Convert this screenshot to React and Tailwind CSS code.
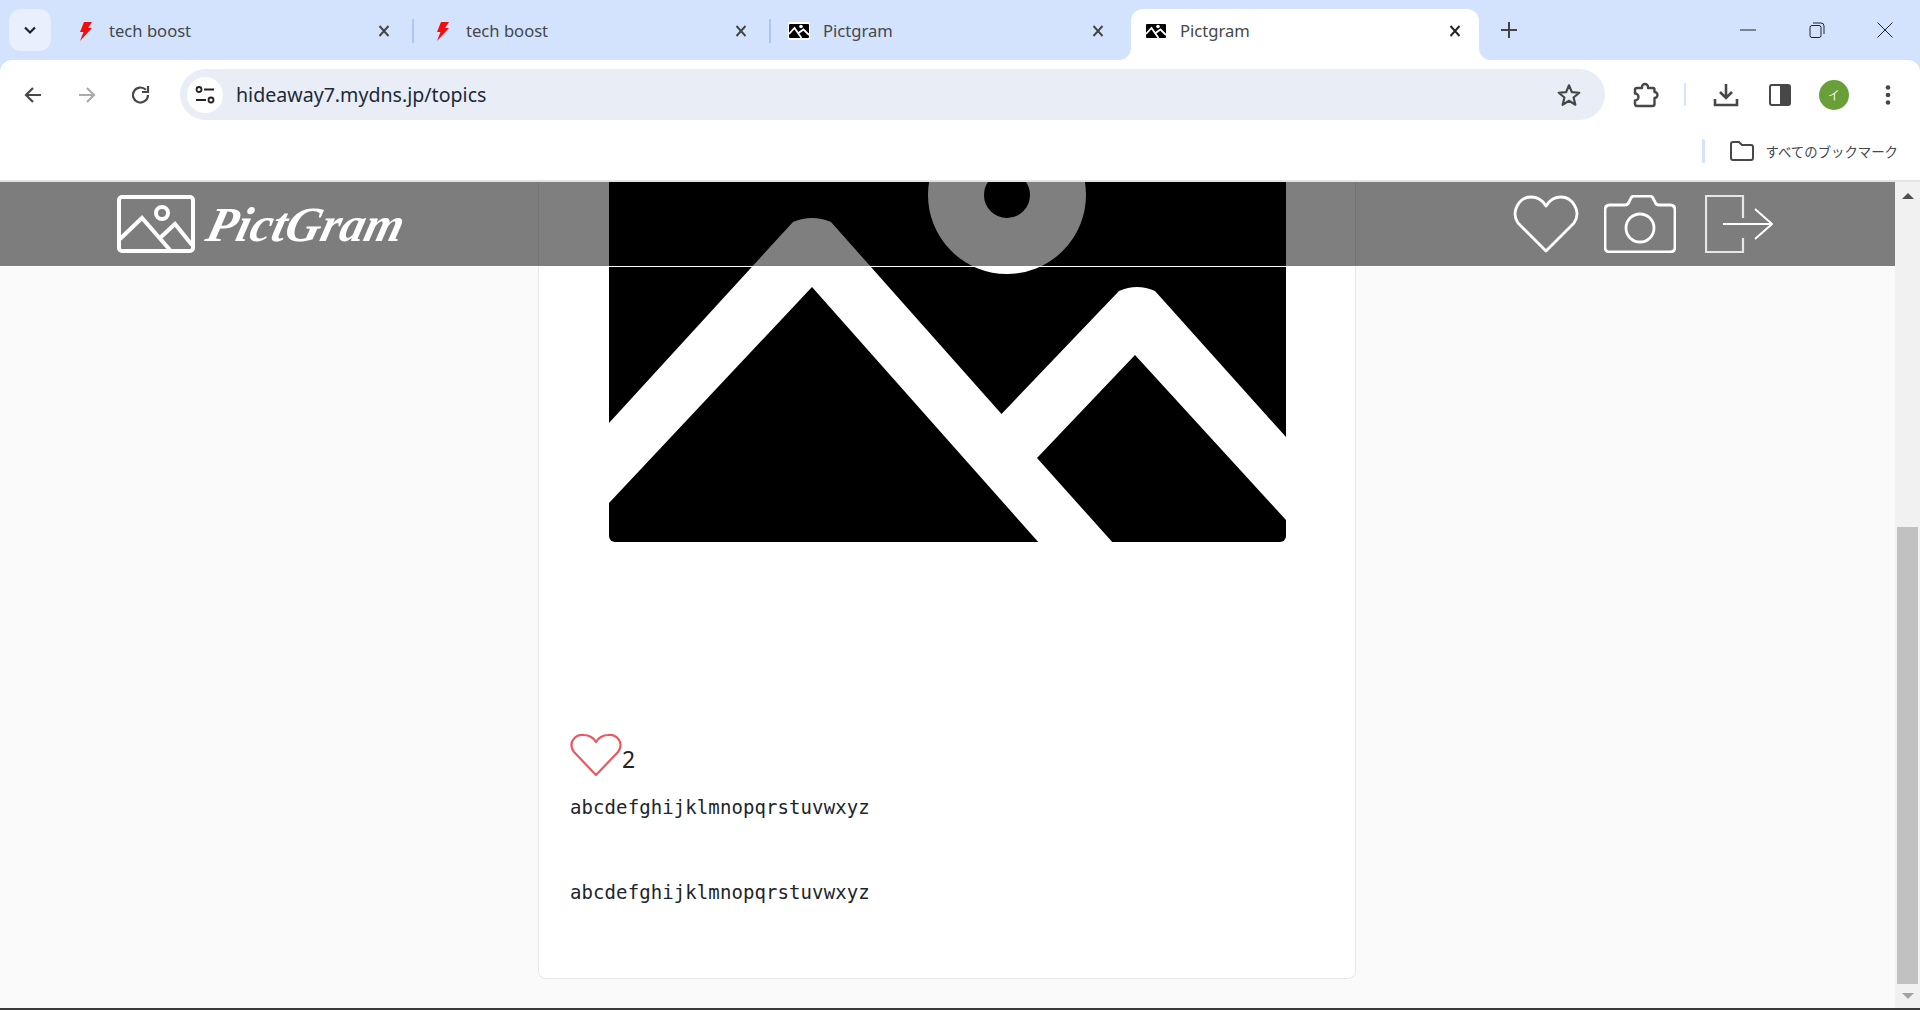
import React from "react";

const Bolt = () => (
  <svg width="14" height="19" viewBox="0 0 14 19" className="ml-[5px] shrink-0">
    <path d="M5 0 L13 0 L9 6 L13 6 L1 19 L4.5 10 L1 10 Z" fill="#f40b0b" />
  </svg>
);

const Pict = ({ frame }) => (
  <svg width="22" height="18" viewBox="0 0 22 18" className="shrink-0">
    {frame ? <rect width="22" height="18" rx="2" fill="#fff" /> : null}
    <rect x="1" y="2" width="20" height="14" rx="1" fill="#000" />
    <circle cx="13" cy="4.5" r="1.8" fill="#fff" />
    <path d="M1 12 L6.5 6 L13.5 16 M10.5 11 L15.5 7.5 L21 13" fill="none" stroke="#fff" strokeWidth="1.8" />
  </svg>
);

const Close = ({ dark }) => (
  <svg width="12" height="12" viewBox="0 0 12 12" className="shrink-0">
    <path d="M1.5 1 L10.5 11 M10.5 1 L1.5 11" stroke={dark ? "#222" : "#444"} strokeWidth="1.9" />
  </svg>
);

const Tab = ({ icon, title, sep, active }) => (
  <div className={active ? "relative flex h-[51px] w-[348px] items-center rounded-t-xl bg-white pb-[7px] pl-[14px] pr-[18px]" : "relative flex h-[51px] w-[357px] items-center pb-[7px] pl-[14px] pr-[27px]"}>
    <div className="flex w-[35px] shrink-0 items-center">{icon}</div>
    <span className="flex-1 text-[16.6px] text-[#45474a] [font-family:'Noto_Sans',sans-serif]">{title}</span>
    <Close dark={active} />
    {sep ? <div className="absolute right-[3px] top-[10px] h-[24px] w-[2px] bg-[#a8c7fa]" /> : null}
    {active ? (
      <>
        <div className="absolute bottom-0 left-[-12px] h-[12px] w-[12px] bg-white">
          <div className="h-full w-full rounded-br-xl bg-[#d3e3fd]" />
        </div>
        <div className="absolute bottom-0 right-[-12px] h-[12px] w-[12px] bg-white">
          <div className="h-full w-full rounded-bl-xl bg-[#d3e3fd]" />
        </div>
      </>
    ) : null}
  </div>
);

const Icon = ({ className, size = 24, children, box = "0 0 24 24" }) => (
  <svg width={size} height={size} viewBox={box} className={className} fill="none">
    {children}
  </svg>
);

export default function App() {
  return (
    <div className="flex h-[1010px] w-[1920px] flex-col overflow-hidden bg-[#d3e3fd] [font-family:'Noto_Sans',sans-serif]">
      {/* tab strip */}
      <div className="flex h-[60px] shrink-0 items-end">
        <div className="ml-[9px] mr-[9px] mb-[9px] flex h-[42px] w-[42px] items-center justify-center rounded-xl bg-[#e8f0fe]">
          <Icon size={14} box="0 0 14 14"><path d="M2 4.5 L7 9.5 L12 4.5" stroke="#222" strokeWidth="2.2" /></Icon>
        </div>
        <Tab icon={<Bolt />} title="tech boost" sep />
        <Tab icon={<Bolt />} title="tech boost" sep />
        <Tab icon={<Pict frame />} title="Pictgram" />
        <Tab icon={<Pict />} title="Pictgram" active />
        <div className="mb-[21px] ml-[21px] flex w-[18px] items-center justify-center">
          <Icon size={18} box="0 0 18 18"><path d="M9 1 V17 M1 9 H17" stroke="#444" strokeWidth="2" /></Icon>
        </div>
        <div className="mb-[21px] ml-[222px] flex h-[18px] w-[153px] items-center justify-between">
          <Icon size={16} box="0 0 16 16"><path d="M0 8 H16" stroke="#222" strokeWidth="1" /></Icon>
          <Icon size={16} box="0 0 16 16"><rect x="1" y="3.5" width="11" height="12" rx="2" stroke="#222" /><path d="M4 1 H12 Q15 1 15 4 V12" stroke="#222" /></Icon>
          <Icon size={16} box="0 0 16 16"><path d="M0.5 0.5 L15.5 15.5 M15.5 0.5 L0.5 15.5" stroke="#222" strokeWidth="1" /></Icon>
        </div>
      </div>

      {/* toolbar */}
      <div className="shrink-0 rounded-t-xl bg-white">
        <div className="flex h-[69px] items-center pl-[21px] pt-[9px] pb-[9px]">
          <Icon><path d="M20 12 H5 M12 5 L5 12 L12 19" stroke="#474747" strokeWidth="2.2" /></Icon>
          <Icon className="ml-[30px]"><path d="M4 12 H19 M12 5 L19 12 L12 19" stroke="#ababab" strokeWidth="2.2" /></Icon>
          <Icon className="ml-[30px]"><path d="M19 12 A7.5 7.5 0 1 1 16.8 6.7" stroke="#474747" strokeWidth="2.2" /><path d="M19 3 V9 H13" stroke="#474747" strokeWidth="2.2" /></Icon>
          <div className="ml-[27px] flex h-[51px] w-[1425px] items-center rounded-full bg-[#e9eef6] pl-[7px] pr-[23px]">
            <div className="flex h-[36px] w-[36px] items-center justify-center rounded-full bg-white">
              <Icon size={22} box="0 0 22 22">
                <circle cx="5" cy="5.5" r="2.5" stroke="#222" strokeWidth="1.8" />
                <path d="M10 5.5 H20 M2 16 H12" stroke="#222" strokeWidth="2" />
                <circle cx="17" cy="16" r="2.5" stroke="#222" strokeWidth="1.8" />
              </Icon>
            </div>
            <span className="ml-[13px] flex-1 text-[19.6px] text-[#1f2937]">hideaway7.mydns.jp/topics</span>
            <Icon size={26} box="0 0 24 24"><path d="M12 3 L14.6 9.4 L21.5 9.9 L16.2 14.3 L17.9 21 L12 17.3 L6.1 21 L7.8 14.3 L2.5 9.9 L9.4 9.4 Z" stroke="#474747" strokeWidth="2" strokeLinejoin="round" /></Icon>
          </div>
          <Icon size={26} className="ml-[28px]" box="0 0 26 26"><path d="M4 6 H9 V5 A3 3 0 0 1 15 5 V6 H20 Q21.5 6 21.5 7.5 V10 A3 3 0 0 1 21.5 16 V22 Q21.5 24 19.5 24 H4 Q2 24 2 22 V18.5 A3.5 3.5 0 0 0 2 11.5 V8 Q2 6 4 6 Z" stroke="#474747" strokeWidth="2.4" strokeLinejoin="round" /></Icon>
          <div className="ml-[25px] h-[23px] w-[2px] rounded bg-[#d3e3fd]" />
          <Icon size={26} className="ml-[27px]" box="0 0 26 26"><path d="M13 2 V16 M7 10 L13 16 L19 10" stroke="#474747" strokeWidth="2.6" /><path d="M2 17 V23 H24 V17" stroke="#474747" strokeWidth="2.6" /></Icon>
          <Icon size={24} className="ml-[29px]"><rect x="2" y="2" width="20" height="20" rx="2" stroke="#474747" strokeWidth="2" /><rect x="12" y="2" width="10" height="20" fill="#474747" /></Icon>
          <div className="ml-[27px] flex h-[30px] w-[30px] items-center justify-center rounded-full bg-[#689f38] text-[12px] text-white">イ</div>
          <Icon size={24} className="ml-[27px]" box="0 0 24 24"><circle cx="12" cy="4.5" r="2.3" fill="#474747" /><circle cx="12" cy="12" r="2.3" fill="#474747" /><circle cx="12" cy="19.5" r="2.3" fill="#474747" /></Icon>
        </div>
        <div className="flex h-[53px] items-center justify-end border-b-2 border-[#e3e3e3] pb-[7px] pr-[22px]">
          <div className="h-[24px] w-[3px] rounded bg-[#d3e3fd]" />
          <Icon size={26} className="ml-[24px]" box="0 0 26 26"><path d="M2 6 Q2 4 4 4 H10 L13 7 H22 Q24 7 24 9 V20 Q24 22 22 22 H4 Q2 22 2 20 Z" stroke="#474747" strokeWidth="2" /></Icon>
          <span className="ml-[11px] text-[13.4px] text-[#45474a] [font-family:'Noto_Sans_CJK_JP','Noto_Sans',sans-serif]">すべてのブックマーク</span>
        </div>
      </div>

      {/* page viewport */}
      <div className="relative flex min-h-0 flex-1">
        <main className="flex min-w-0 flex-1 justify-center bg-[#fafafa]">
          <div className="mb-[29px] ml-[-1px] flex h-[797px] w-[818px] flex-col rounded-b-lg border border-t-0 border-[#e6e9ec] bg-white pl-[31px]">
            <svg width="677" height="360" viewBox="609 182 677 360" className="ml-[39px] shrink-0">
              <rect x="609" y="150" width="677" height="392" rx="6" fill="#000" />
              <path d="M609 423 L793 222 Q812 214 831 222 L1001.5 414 L1119 291 Q1137 283 1155 291 L1286 437 L1286 520 L1135 355 L1037 458 L1114 544 L1040 544 L812 287 L609 503 Z" fill="#fff" />
              <circle cx="1007" cy="195" r="51" fill="none" stroke="#fff" strokeWidth="56" />
            </svg>
            <div className="mt-[191px] flex items-end">
              <svg width="52" height="44" viewBox="0 0 52 44" className="shrink-0">
                <path d="M26 42 L4 19 C-3 9 6 1 14 2 C19 2 24 5 26 9 C28 5 33 2 38 2 C46 1 55 9 48 19 Z" fill="none" stroke="#e85a60" strokeWidth="2.2" strokeLinejoin="round" />
              </svg>
              <span className="mb-[3px] text-[23px] leading-[30px] text-[#212529]">2</span>
            </div>
            <div className="mt-[15px] text-[19px] leading-[30px] tracking-[0.09px] text-[#212529] [font-family:'DejaVu_Sans_Mono',monospace]">abcdefghijklmnopqrstuvwxyz</div>
            <div className="mt-[55px] text-[19px] leading-[30px] tracking-[0.09px] text-[#212529] [font-family:'DejaVu_Sans_Mono',monospace]">abcdefghijklmnopqrstuvwxyz</div>
          </div>
        </main>

        {/* scrollbar */}
        <div className="flex w-[25px] shrink-0 flex-col items-center bg-[#f1f1f1] pt-[11px]">
          <div className="h-0 w-0 border-x-[6px] border-b-[6px] border-x-transparent border-b-[#505050]" />
          <div className="mt-[328px] h-[457px] w-[21px] bg-[#c1c1c1]" />
          <div className="mt-[9px] h-0 w-0 border-x-[6px] border-t-[6px] border-x-transparent border-t-[#a3a3a3]" />
        </div>

        {/* fixed page header */}
        <header className="absolute left-0 right-[25px] top-0 flex h-[85px] items-center border-b border-white bg-black/50 pl-[117px] pr-[122px]">
          <svg width="78" height="58" viewBox="0 0 78 58" className="shrink-0" fill="none">
            <rect x="2" y="2" width="74" height="54" rx="3" stroke="#fff" strokeWidth="4" />
            <circle cx="45" cy="18" r="6" stroke="#fff" strokeWidth="4" />
            <path d="M3 44 L25 23 L53 55 M44 42 L58 29 L75 50" stroke="#fff" strokeWidth="4" />
          </svg>
          <span className="ml-[13px] inline-block origin-left skew-x-[-14deg] text-[49px] font-bold italic leading-none text-white [font-family:'Liberation_Serif',serif]">PictGram</span>
          <div className="flex-1" />
          <svg width="66" height="58" viewBox="0 0 66 58" fill="none" className="shrink-0">
            <path d="M33 56 L5 28 C-3 16 7 2 18 2 C25 2 30 6 33 11 C36 6 41 2 48 2 C59 2 69 16 61 28 Z" stroke="#fff" strokeWidth="2.8" strokeLinejoin="round" />
          </svg>
          <svg width="72" height="58" viewBox="0 0 72 58" fill="none" className="ml-[25px] shrink-0">
            <path d="M6 10 H21 Q24 10 25 7 L27 3 Q28 1 30 1 H46 Q48 1 49 3 L51 7 Q52 10 55 10 H66 Q71 10 71 15 V52 Q71 57 66 57 H6 Q1 57 1 52 V15 Q1 10 6 10 Z" stroke="#fff" strokeWidth="2.8" />
            <circle cx="36" cy="33" r="14" stroke="#fff" strokeWidth="2.8" />
          </svg>
          <svg width="68" height="58" viewBox="0 0 68 58" fill="none" className="ml-[29px] shrink-0">
            <path d="M38 23 V1 H1 V57 H38 V43" stroke="#e6e6e6" strokeWidth="2.2" />
            <path d="M18 29 H67 M50 14 L67 29 L50 44" stroke="#fff" strokeWidth="2" />
          </svg>
        </header>
      </div>

      <div className="h-[2px] shrink-0 bg-[#3a3a3a]" />
    </div>
  );
}
